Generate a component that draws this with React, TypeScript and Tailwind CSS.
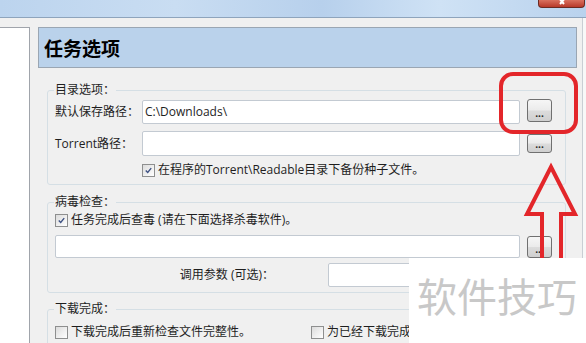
import React from "react";

const ui = "font-['Open_Sans','Noto_Sans_CJK_SC',sans-serif]";

function Browse({ h = "h-[23px]" }: { h?: string }) {
  return (
    <button
      className={`w-[25px] ${h} shrink-0 border border-[#707070] rounded-[3px] bg-[linear-gradient(#f6f6f6,#ebebeb_48%,#dcdcdc_52%,#cfcfcf)] flex items-end justify-center pb-[3px] text-[10px] leading-none text-[#222] font-bold`}
    >
      ...
    </button>
  );
}

function Check({ on }: { on?: boolean }) {
  return (
    <span className="w-[13px] h-[13px] shrink-0 border border-[#8e8f8f] bg-[linear-gradient(135deg,#dcdcdc,#ffffff)] p-[2px] flex items-center justify-center">
      {on && (
        <svg width="9" height="9" viewBox="0 0 9 9">
          <path d="M1 4.5 L3.5 7 L8 1.5" fill="none" stroke="#3c5082" strokeWidth="1.8" />
        </svg>
      )}
    </span>
  );
}

function Group({ title, className = "", children }: { title: string; className?: string; children: React.ReactNode }) {
  return (
    <fieldset className={`ml-[9px] w-[519px] border border-[#d5dfe5] rounded-[3px] pl-[7px] pr-[12px] ${className}`}>
      <legend className="leading-[16px] px-[1px] -ml-[1px] text-[#1e1e1e]">{title}</legend>
      {children}
    </fieldset>
  );
}

export default function App() {
  return (
    <div className={`relative w-[586px] h-[343px] overflow-hidden bg-[#f0f0f0] text-[12px] text-[#1e1e1e] ${ui}`}>
      {/* glass title bar */}
      <div className="relative h-[18px] border-b border-[#8ea4bc] bg-[linear-gradient(90deg,#bcd4ee,#c9ddf2_30%,#b7d0ec_55%,#cfe2f5_75%,#b9d2ed)]">
        <div className="absolute right-[1px] top-0 w-[47px] h-[8px] rounded-b-[4px] border border-t-0 border-[#6b2a22] bg-[linear-gradient(#d9705e,#b8392a)] flex justify-center overflow-hidden">
          <svg width="12" height="7" viewBox="0 0 12 7">
            <path d="M2 -3 L8 4 M10 -3 L4 4" stroke="#fff" strokeWidth="2" />
          </svg>
        </div>
      </div>

      <div className="flex h-[325px]">
        <div className="mt-[9px] w-[30px] bg-white border-t border-r border-[#a0a4ab]" />
        <div className="flex-1 pl-[8px] pt-[9px] pr-[5px]">
          <div className="w-[539px] h-[41px] border border-[#9aa6b3] bg-[#bad2eb] pl-[5px] flex items-center">
            <span className="text-[19px] font-bold text-black font-['Noto_Sans_CJK_SC',sans-serif] leading-none">任务选项</span>
          </div>

          <Group title="目录选项：" className="mt-[14px] pb-[7px]">
            <div className="mt-[2px] flex items-center">
              <span className="w-[87px]">默认保存路径：</span>
              <div className="w-[378px] h-[24px] bg-white border border-[#c3cad2] rounded-[2px] pl-[2px] flex items-center">C:\Downloads\</div>
              <div className="ml-[7px] self-start -mt-[1px]">
                <Browse />
              </div>
            </div>
            <div className="mt-[7px] flex items-center">
              <span className="w-[87px]">Torrent路径：</span>
              <div className="w-[378px] h-[25px] bg-white border border-[#c3cad2] rounded-[2px]" />
              <div className="ml-[7px]">
                <Browse h="h-[19px]" />
              </div>
            </div>
            <div className="mt-[7px] h-[14px] flex items-center pl-[87px] gap-[3px]">
              <Check on />
              <span>在程序的Torrent\Readable目录下备份种子文件。</span>
            </div>
          </Group>

          <Group title="病毒检查：" className="mt-[9px] pb-[5px]">
            <div className="mt-[3px] h-[14px] flex items-center gap-[3px]">
              <Check on />
              <span>任务完成后查毒 (请在下面选择杀毒软件)。</span>
            </div>
            <div className="mt-[8px] flex items-center">
              <div className="w-[465px] h-[23px] bg-white border border-[#c3cad2] rounded-[2px]" />
              <div className="ml-[7px]">
                <Browse h="h-[22px]" />
              </div>
            </div>
            <div className="mt-[5px] flex items-center">
              <span className="w-[219px] text-right">调用参数 (可选)：</span>
              <div className="ml-[54px] w-[192px] h-[24px] bg-white border border-[#c3cad2] rounded-[2px]" />
            </div>
          </Group>

          <Group title="下载完成：" className="mt-[8px] pb-[6px]">
            <div className="mt-[8px] h-[14px] flex items-center">
              <Check />
              <span className="ml-[3px]">下载完成后重新检查文件完整性。</span>
              <span className="ml-[60px]">
                <Check />
              </span>
              <span className="ml-[3px] whitespace-nowrap">为已经下载完成的文件</span>
            </div>
          </Group>
        </div>
        <div className="w-[4px] border-l border-[#c9ced4] bg-[#f8f8f8]" />
      </div>

      {/* red annotations */}
      <svg className="absolute left-0 top-0 pointer-events-none" width="586" height="343">
        <rect x="501" y="74" width="75" height="58" rx="12" fill="none" stroke="#e3262a" strokeWidth="4" />
        <path
          d="M542 262 L542 214 L527 214 L551 167 L575 214 L561 214 L561 262"
          fill="none"
          stroke="#e3262a"
          strokeWidth="4"
          strokeLinejoin="miter"
        />
      </svg>

      {/* watermark */}
      <div className="absolute left-[409px] top-[258px] w-[177px] h-[85px] bg-white pl-[8px] pt-[14px]">
        <span className="text-[40px] leading-[46px] text-[#c8c8c8] font-['Noto_Sans_CJK_SC',sans-serif]">软件技巧</span>
      </div>
    </div>
  );
}
